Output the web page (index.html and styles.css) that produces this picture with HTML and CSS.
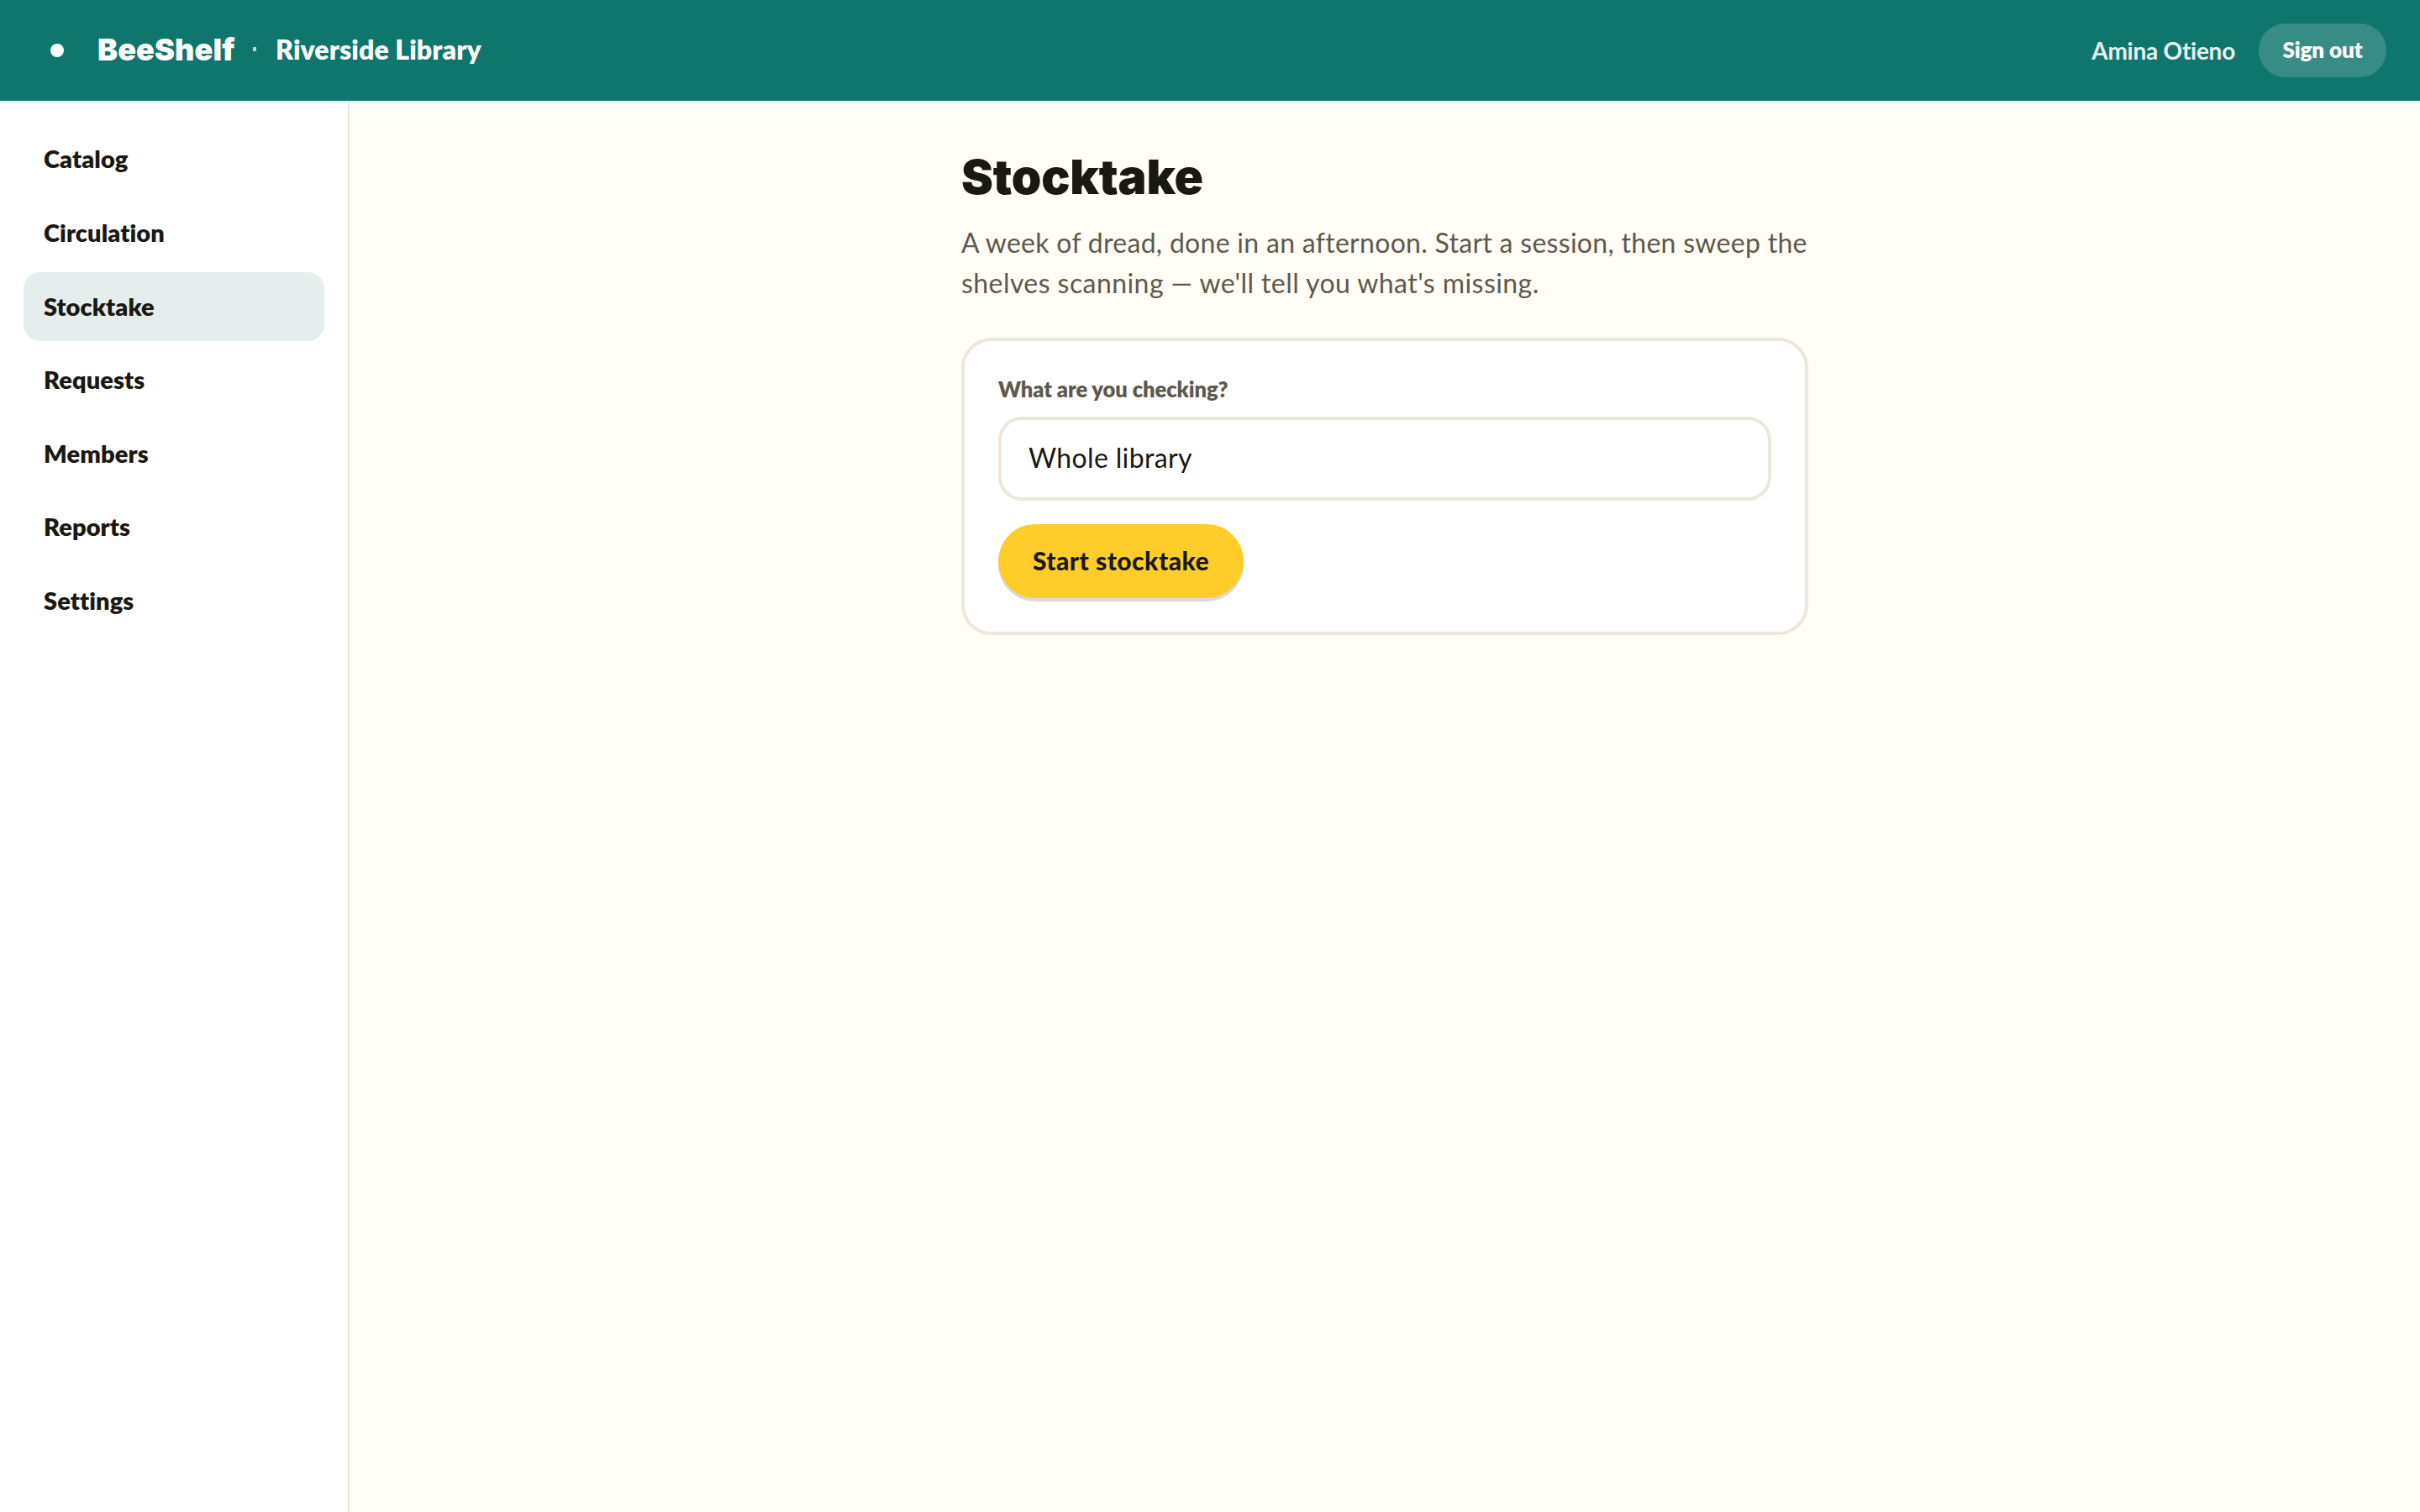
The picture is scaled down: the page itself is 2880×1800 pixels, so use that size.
FILE: index.html
```
<!DOCTYPE html>
<html lang="en">
<head>
    <meta charset="UTF-8">
    <meta name="viewport" content="width=device-width, initial-scale=1.0">
    <title>Stocktake · BeeShelf</title>
    <link rel="stylesheet" href="styles.css">
</head>
<body>
    <header class="topbar">
        <span class="logo-dot"></span>
        <span class="brand">BeeShelf</span>
        <span class="brand-sep"></span>
        <span class="library-name">Riverside Library</span>
        <span class="user-name">Amina Otieno</span>
        <button class="sign-out" type="button">Sign out</button>
    </header>

    <div class="layout">
        <nav class="sidebar">
            <a class="nav-item">Catalog</a>
            <a class="nav-item">Circulation</a>
            <a class="nav-item active">Stocktake</a>
            <a class="nav-item">Requests</a>
            <a class="nav-item">Members</a>
            <a class="nav-item">Reports</a>
            <a class="nav-item">Settings</a>
        </nav>

        <main class="content">
            <div class="page">
                <h1>Stocktake</h1>
                <p class="intro"><span class="intro-first">A week of dread, done in an afternoon. Start a session, then sweep the</span><br>shelves scanning — we'll tell you what's missing.</p>

                <form class="card">
                    <label class="field-label" for="scope">What are you checking?</label>
                    <select class="field" id="scope">
                        <option>Whole library</option>
                    </select>
                    <button class="start" type="button">Start stocktake</button>
                </form>
            </div>
        </main>
    </div>
</body>
</html>
```
FILE: styles.css
```
* {
    margin: 0;
    padding: 0;
    box-sizing: border-box;
}

body {
    display: flex;
    flex-direction: column;
    height: 100vh;
    background: #fffdf6;
    color: #1a1812;
    font-family: Lato, sans-serif;
    font-variant-ligatures: none;
}

button,
select {
    border: none;
    font-family: inherit;
    color: inherit;
}

/* top bar */
.topbar {
    display: flex;
    align-items: center;
    height: 120px;
    padding: 0 40px 0 60px;
    background: #0f766e;
    color: #fff;
}

.logo-dot {
    width: 16px;
    height: 16px;
    border-radius: 50%;
    background: #fff;
}

.brand {
    width: 162px;
    margin-left: 40px;
    padding-bottom: 2px;
    font-family: Inter, sans-serif;
    font-size: 36px;
    font-weight: 900;
    letter-spacing: 0.1px;
    white-space: nowrap;
}

.brand-sep {
    width: 4px;
    height: 5px;
    margin: 0 23px 3px;
    background: rgba(255, 255, 255, 0.7);
}

.library-name {
    padding-bottom: 4px;
    font-size: 32px;
    font-weight: 800;
    letter-spacing: 0.1px;
    white-space: nowrap;
}

.user-name {
    margin-left: auto;
    font-size: 28px;
    font-weight: 700;
    letter-spacing: -0.25px;
    opacity: 0.9;
}

.sign-out {
    width: 152px;
    height: 64px;
    margin-left: 28px;
    padding-bottom: 3px;
    border-radius: 32px;
    background: rgba(255, 255, 255, 0.17);
    font-size: 26px;
    font-weight: 800;
    letter-spacing: -0.1px;
}

.layout {
    display: flex;
    flex: 1;
}

/* sidebar */
.sidebar {
    display: flex;
    flex-direction: column;
    gap: 5.67px;
    width: 416px;
    padding: 28.2px 28px;
    background: #fff;
    border-right: 2px solid #ede7db;
}

.nav-item {
    height: 82px;
    padding: 0 24px;
    border-radius: 20px;
    font-size: 29px;
    font-weight: 800;
    line-height: 82px;
    letter-spacing: 0.1px;
}

.nav-item.active {
    background: #e5eeec;
}

/* page */
.content {
    flex: 1;
    padding-top: 62px;
}

.page {
    width: 1008px;
    margin: 0 auto;
}

h1 {
    font-family: Inter, sans-serif;
    font-size: 57px;
    font-weight: 900;
    line-height: 58px;
    letter-spacing: -0.2px;
}

.intro {
    margin-top: 25px;
    font-size: 32px;
    line-height: 48px;
    letter-spacing: 0.43px;
    color: #5e594c;
    white-space: nowrap;
}

.intro-first {
    letter-spacing: 0.29px;
}

.card {
    display: flex;
    flex-direction: column;
    align-items: flex-start;
    margin-top: 41px;
    padding: 42px 40px 40px;
    border: 4px solid #ede7db;
    border-radius: 36px;
    background: #fff;
}

.field-label {
    font-size: 25.5px;
    font-weight: 800;
    line-height: 31px;
    letter-spacing: -0.05px;
    color: #5e594c;
}

.field {
    width: 100%;
    height: 100px;
    margin-top: 17px;
    padding: 0 32px 4px;
    border: 4px solid #ede7db;
    border-radius: 28px;
    background: #fff;
    font-size: 32px;
    letter-spacing: 0.35px;
    appearance: none;
}

.start {
    width: 292px;
    height: 88px;
    margin-top: 28px;
    padding-bottom: 3px;
    border-radius: 44px;
    background: #ffcd2a;
    box-shadow: 0 4px 0 rgba(0, 0, 0, 0.15);
    font-size: 30px;
    font-weight: 900;
    letter-spacing: 0.45px;
    white-space: nowrap;
}
```
